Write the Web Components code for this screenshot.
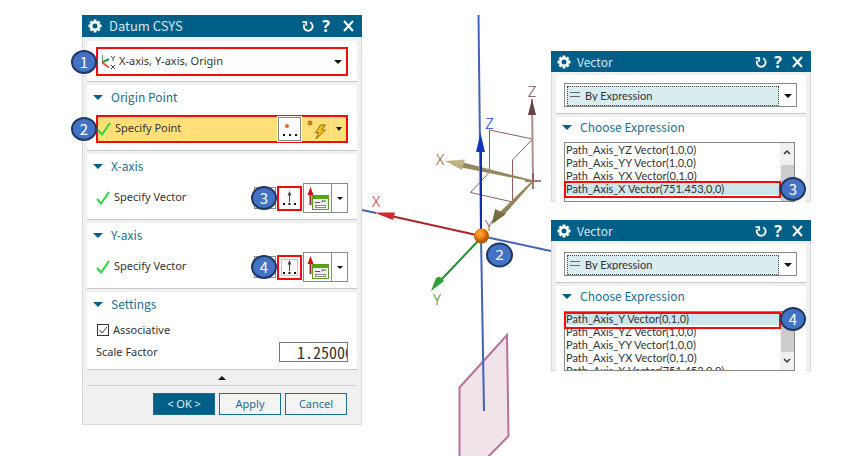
<!DOCTYPE html>
<html lang="en">
<head>
<meta charset="utf-8">
<title>Datum CSYS</title>
<style>
  body { margin: 0; background: #fff; font-family: "Noto Sans", sans-serif; font-size: 11px; color: #333; }
</style>
</head>
<body>
<app-workspace></app-workspace>

<script>
const define = (name, html, setup) => {
  const template = document.createElement('template');
  template.innerHTML = html;
  customElements.define(name, class extends HTMLElement {
    constructor() {
      super();
      this.attachShadow({ mode: 'open' }).append(template.content.cloneNode(true));
    }
    connectedCallback() { if (setup) setup(this, this.shadowRoot); }
  });
};

/* Numbered callout that lies over the control it refers to */
define('step-badge', `
<style>
  :host { display: flex; align-items: center; justify-content: center; box-sizing: border-box; width: 26px; height: 24px;
    border: 2px solid #1f3864; border-radius: 50%; background: #4472c4; color: #fff;
    font: 15px/20px "Noto Sans CJK KR", "Noto Sans", sans-serif; }
</style><slot></slot>`);

/* Window frame with a title bar */
define('dialog-window', `
<style>
  :host { display: block; background: #f0f0f0; box-shadow: inset 0 0 0 1px #d8d8d8; }
  header { display: flex; align-items: center; gap: var(--bar-gap, 7px); height: var(--bar, 22px); padding: 0 8px 0 6px; background: #005f87; color: #d5e5ee; font: var(--title, 13px)/20px "Noto Sans CJK KR", "Noto Sans", sans-serif; }
  h1 { flex: 1; margin: 0; font: inherit; line-height: 20px; }
  button { display: flex; padding: 0; border: 0; background: none; color: #fff; }
  .help { width: 16px; justify-content: center; font: bold 16px/20px "Open Sans", sans-serif; margin: 0 var(--help-end, 2px) 0 -3px; }
  svg { display: block; }
  main { display: flex; flex-direction: column; gap: 3px; padding: var(--top, 4px) 5px 0 5px; }
</style>
<header>
  <svg width="14" height="14" viewBox="0 0 14 14" fill="none" stroke="#fff"><circle cx="7" cy="7" r="3.800" stroke-width="2.600"/><path stroke-width="2.800" d="M7 .5v2M7 11.500v2M.5 7h2M11.500 7h2M2.400 2.400l1.400 1.400M10.200 10.200l1.400 1.400M11.600 2.400l-1.400 1.400M3.800 10.200l-1.400 1.400"/></svg>
  <h1></h1>
  <button aria-label="Reset"><svg width="12" height="14" viewBox="0 0 12 14" fill="none" stroke="#fff" stroke-width="1.800"><path d="M2.200 5.500A4.400 4.400 0 1 0 8 3.300"/><path d="M.5 3.200h3.700v3.500"/></svg></button>
  <button class="help" aria-label="Help">?</button>
  <button aria-label="Close"><svg width="11" height="12" viewBox="0 0 11 12" stroke="#fff" stroke-width="2"><path d="M1 1l9 10M10 1L1 11"/></svg></button>
</header>
<main><slot></slot></main>`,
(el, root) => { root.querySelector('h1').textContent = el.getAttribute('heading'); });

/* White group with an optional collapsible heading */
define('dialog-section', `
<style>
  :host { display: block; background: #fff; border-bottom: 1px solid #c8c8c8; }
  button { display: flex; align-items: center; gap: 8px; height: var(--heading, 24px); padding: 0 0 0 6px; border: 0; background: none; color: #1a6f92; font: 12px/20px "Noto Sans CJK KR", "Noto Sans", sans-serif; }
  i { border: solid transparent; border-width: 5px 5px 0; border-top-color: #005f87; }
  :host(:not([heading])) button { display: none; }
</style>
<button aria-expanded="true"><i></i><span></span></button><slot></slot>`,
(el, root) => { root.querySelector('span').textContent = el.getAttribute('heading') || ''; });

/* Drop-down with an icon in front of its value */
define('icon-select', `
<style>
  :host { display: grid; grid-template-columns: 1fr 17px; box-sizing: border-box; position: relative; align-items: center; color: #333; }
  slot { display: block; position: absolute; left: 3px; pointer-events: none; }
  select { grid-column: 1 / 3; grid-row: 1; width: 100%; height: 100%; padding: 0 0 2px 21px; border: 0; background: none; appearance: none; outline: 0; color: inherit; font: inherit; }
  i { grid-column: 2; grid-row: 1; justify-self: center; border: solid transparent; border-width: 4px 4px 0; border-top-color: #111; pointer-events: none; }
  :host([shaded]) slot { left: 5px; }
  :host([shaded]) select { grid-column: 1; height: calc(100% - 4px); margin-left: 2px; width: calc(100% - 2px); border: 1px dotted #444; background: #d9ecf0; padding: 0 0 4px 17px; }
</style>
<select aria-label="Type"><option></option></select><i></i><slot></slot>`,
(el, root) => { root.querySelector('option').textContent = el.getAttribute('value'); });

/* Completed selection step: tick, label, tools */
define('specify-row', `
<style>
  :host { display: flex; align-items: center; position: relative; height: 30px; margin: 5px 9px 6px; }
  :host([active]) { height: 24px; margin-top: 6px; margin-bottom: 7px; border: 2px solid #f60b0b; background: #ffdf78; }
  .tick { margin-right: 4px; flex: none; }
  :host([active]) .tick { margin-left: -1px; }
  span { flex: 1; padding-bottom: 2px; }
</style>
<svg class="tick" width="14" height="14" viewBox="0 0 14 14" fill="none" stroke="#26d83c" stroke-width="2"><path d="M1 8l4 4.500L13 1"/></svg>
<span></span><slot></slot>`,
(el, root) => { root.querySelector('span').textContent = el.getAttribute('label'); });

define('point-tools', `
<style>
  :host { display: flex; height: 24px; }
  button { display: flex; align-items: center; justify-content: center; box-sizing: border-box; height: 24px; padding: 0; border: 0; background: none; }
  .dots { width: 23px; border: 1px solid #8a8a8a; background: #fff; box-shadow: 0 0 0 1px #fff8dc; }
  .snap { width: 30px; }
  .more { width: 15px; border-left: 1px solid #fff1c0; }
  i { border: solid transparent; border-width: 4px 3px 0; border-top-color: #111; }
</style>
<button class="dots" aria-label="Point dialog"><svg width="20" height="20"><circle cx="7" cy="7" r="2" fill="#e8681c"/><path d="M3 16h2M9 16h2M15 16h2" stroke="#111" stroke-width="2"/></svg></button>
<button class="snap" aria-label="Inferred point"><svg width="24" height="22"><circle cx="6" cy="5" r="2" fill="#e8791c" stroke="#b8641a"/><path d="M16.500 7h5l-4 5h4l-9.500 9 2.500-6.500h-3z" fill="#f5c010" stroke="#8a7018"/></svg></button>
<button class="more" aria-label="Point types"><i></i></button>`);

define('vector-tools', `
<style>
  :host { display: flex; align-items: center; position: relative; }
  button { display: flex; align-items: center; justify-content: center; box-sizing: border-box; padding: 0; border: 1px solid #8a8a8a; background: #fff; }
  .flip { width: 22px; height: 22px; margin-right: 1px; }
  .dots { width: 25px; height: 25px; border: 2px solid #f60b0b; margin-right: 1px; }
  .type { width: 29px; height: 30px; }
  .more { width: 17px; height: 30px; margin-left: -1px; }
  i { border: solid transparent; border-width: 3px 3px 0; border-top-color: #111; }
  step-badge { position: absolute; left: -3px; top: 3px; }
  rect.focus { display: none; }
  :host([focused]) rect.focus { display: block; }
</style>
<button class="flip" aria-label="Reverse direction"></button>
<button class="dots" aria-label="Vector dialog"><svg width="21" height="21"><rect class="focus" x="2.500" y="2.500" width="16" height="16" fill="none" stroke="#888" stroke-dasharray="1 1"/><path d="M10.500 14V5" stroke="#444" fill="none"/><path d="M8.500 7.500L10.500 3l2 4.500z" fill="#444"/><path d="M4 16h2M9.500 16h2M15 16h2" stroke="#111" stroke-width="2"/></svg></button>
<button class="type" aria-label="By expression"><svg width="27" height="28"><path d="M6.500 10v11" stroke="#a03030" stroke-width="2"/><path d="M3.500 11L6.500 3l3 8z" fill="#d01010"/><rect x="8.500" y="11.500" width="16" height="14" fill="#eef1ea" stroke="#5a9a20"/><path d="M9 13.500h15" stroke="#58a618" stroke-width="3"/><path d="M11 18.500h5M18 18.500v-1.500h4" stroke="#555" fill="none"/><rect x="11.500" y="21.500" width="10" height="2" fill="#fff" stroke="#888"/></svg></button>
<button class="more" aria-label="Vector types"><i></i></button>
<step-badge></step-badge>`,
(el, root) => { root.querySelector('step-badge').textContent = el.getAttribute('step'); });

define('datum-dialog', `
<style>
  :host { display: block; }
  .type { position: relative; padding: 6px 9px 5px; }
  .type icon-select { height: 29px; border: 2px solid #f60b0b; }
  step-badge.edge { position: absolute; left: -27px; top: 0; }
  .type step-badge.edge { left: -16px; top: 9px; }
  .settings { display: grid; grid-template-columns: 1fr 69px; align-items: center; row-gap: 2px; padding: 4px 9px 7px; }
  .check { grid-column: 1 / 3; display: flex; align-items: center; gap: 4px; height: 20px; }
  input[type=checkbox] { appearance: none; box-sizing: border-box; width: 12px; height: 12px; margin: 0; border: 1px solid #333; background: #fff; }
  .box { position: relative; display: flex; margin-left: 1px; }
  .box svg { position: absolute; left: 0; top: 0; pointer-events: none; }
  input[type=text] { box-sizing: border-box; width: 100%; height: 20px; padding: 0 0 0 17px; border: 1px solid #777; color: #333; font: 16px/18px "Noto Sans Mono CJK KR", "Noto Sans CJK KR", monospace; outline: 0; }
  .collapse { display: flex; justify-content: center; align-items: center; height: 16px; margin-top: -3px; padding: 0; border: 0; border-bottom: 1px solid #d0d0d0; background: none; }
  .collapse i { border: solid transparent; border-width: 0 4px 4px; border-bottom-color: #111; }
  footer { display: flex; justify-content: flex-end; gap: 4px; padding: 4px 10px 10px; }
  footer button { box-sizing: border-box; width: 62px; height: 22px; padding: 0; border: 1px solid #1a6f92; background: #f4f4f4; color: #1a6f92; font: inherit; line-height: 18px; }
  footer .ok { background: #005f87; color: #e0edf3; }
</style>
<dialog-window heading="Datum CSYS">
  <dialog-section><div class="type"><icon-select value="X-axis, Y-axis, Origin">
    <svg width="16" height="18" fill="none" style="display:block"><path d="M1.500 9V2" stroke="#777"/><path d="M1 9.500L8 6" stroke="#30a050" stroke-width="2"/><path d="M1 9.500l7 5" stroke="#e05050" stroke-width="2"/><path d="M10 3l2 2.500L14 3M12 5.500V8M10 12l4 4M14 12l-4 4" stroke="#444"/></svg>
  </icon-select><step-badge class="edge">1</step-badge></div></dialog-section>
  <dialog-section heading="Origin Point"><specify-row active label="Specify Point"><point-tools></point-tools><step-badge class="edge">2</step-badge></specify-row></dialog-section>
  <dialog-section heading="X-axis"><specify-row label="Specify Vector"><vector-tools step="3"></vector-tools></specify-row></dialog-section>
  <dialog-section heading="Y-axis"><specify-row label="Specify Vector"><vector-tools step="4" focused></vector-tools></specify-row></dialog-section>
  <dialog-section heading="Settings"><div class="settings">
    <div class="check"><div class="box"><input id="assoc" type="checkbox" checked><svg width="12" height="12" fill="none" stroke="#333"><path d="M2.500 6l2.500 3L10 3"/></svg></div><label for="assoc">Associative</label></div>
    <label for="scale">Scale Factor</label><input id="scale" type="text" value="1.25000">
  </div></dialog-section>
  <button class="collapse" aria-label="Show less"><i></i></button>
  <footer><button class="ok">&lt; OK &gt;</button><button>Apply</button><button>Cancel</button></footer>
</dialog-window>`);

define('vector-dialog', `
<style>
  :host { display: block; font-family: Lato, "Noto Sans", sans-serif; }
  dialog-window { --bar: 21px; --bar-gap: 6px; --title: 12px; --top: 3px; --heading: 20px; --help-end: 0px; }
  .type { padding: 8px 9px 6px 8px; }
  .type icon-select { height: 24px; border: 1px solid #888; }
  dialog-section[heading] { border-bottom: 0; }
  .list { position: relative; box-sizing: border-box; display: grid; grid-template-columns: 1fr 14px; height: 60px; margin: 5px 11px 0 8px; border: 1px solid #888; }
  select { box-sizing: border-box; width: 100%; height: 58px; padding: 0; border: 0; background: none; overflow: hidden; outline: 0; font: inherit; color: #333; scrollbar-width: none; }
  option { height: 13px; min-height: 13px; padding: 0 0 0 1px; line-height: 13px; color: #333; }
  option:checked { background: linear-gradient(#cde6ea, #cde6ea); color: #333; }
  .bar { display: flex; flex-direction: column; align-items: center; background: #f0f0f0; }
  .bar svg { flex: none; }
  .thumb { flex: 1; width: 13px; background: #ccc; }
  .mark { position: absolute; left: -1px; right: 13px; height: 17px; box-sizing: border-box; border: 2px solid #f60b0b; }
  step-badge { position: absolute; right: -12px; }
  :host(:not([variant])) .mark { top: 38px; }
  :host(:not([variant])) step-badge { top: 34px; }
  :host([variant]) .mark { top: 0; }
  :host([variant]) step-badge { top: -5px; }
  :host(:not([variant])) .down, :host([variant]) .up { display: none; }
</style>
<dialog-window heading="Vector">
  <dialog-section><div class="type"><icon-select shaded value="By Expression">
    <svg width="10" height="6" style="display:block"><path d="M0 .5h10M0 4.500h10" stroke="#666"/></svg></icon-select></div></dialog-section>
  <dialog-section heading="Choose Expression"><div class="list">
    <select size="4" aria-label="Expressions"></select>
    <div class="bar"><svg class="up" width="12" height="22" fill="none" stroke="#333" stroke-width="1.500"><path d="M3 11l3-3 3 3"/></svg><div class="thumb"></div><svg class="down" width="12" height="18" fill="none" stroke="#333" stroke-width="1.500"><path d="M3 7l3 3 3-3"/></svg></div>
    <div class="mark"></div><step-badge></step-badge>
  </div></dialog-section>
</dialog-window>`,
(el, root) => {
  const items = el.getAttribute('items').split('|');
  const list = root.querySelector('select');
  items.forEach((text, i) => list.add(new Option(text, text, false, i === +el.getAttribute('selected'))));
  list.scrollTop = 0;
  root.querySelector('step-badge').textContent = el.getAttribute('step');
});

/* 3D viewport: path line, dynamic CSYS and target plane */
define('csys-scene', `
<style>
  :host { display: block; }
  svg { display: block; width: 100%; height: auto; font: 15px "Noto Sans", sans-serif; text-anchor: middle; }
  text { font-weight: 300; }
</style>
<svg viewBox="362 15 189 441" fill="none">
  <defs>
    <radialGradient id="ball" cx=".4" cy=".35"><stop offset="0" stop-color="#ffb050"/><stop offset=".6" stop-color="#f08010"/><stop offset="1" stop-color="#b85a00"/></radialGradient>
    <linearGradient id="tan" x1="0" y1="0" x2="0" y2="1"><stop offset="0" stop-color="#c4b88a"/><stop offset="1" stop-color="#6b6136"/></linearGradient>
  </defs>
  <path d="M459.500 460V387.500L507 335l1.500 101L484 461" fill="#f0e4ea" stroke="#b8709a" stroke-width="2"/>
  <path d="M478.500 15L481 236l3 175M362 210l14 3M481 236l70 15" stroke="#4264b8" stroke-width="2"/>
  <path d="M489.500 172v-42l43 9-20 21v42l-42-9.500z" stroke="#905c5c"/>
  <path d="M533 181l-1-82" stroke="#b28c8c" stroke-width="2"/>
  <path d="M532 99l4 16h-8z" fill="#6a4242"/>
  <path d="M525 181h16M533 173v16" stroke="#8a5050" stroke-width="1.500"/>
  <path d="M533 181l-71-18 0 4zM533 181l-33 32 3 2z" fill="#94885a" stroke="#94885a" stroke-width="1.500"/>
  <path d="M445 161l20-1.500-3 10.500zM492 224l3-15 11 5z" fill="url(#tan)"/>
  <path d="M481 236V150" stroke="#1030b0" stroke-width="2"/>
  <path d="M480.500 133l4.500 19h-9z" fill="#1238b8"/>
  <path d="M481 236l-90-20" stroke="#b02028" stroke-width="2"/>
  <path d="M374 212.500l21 0-2 7.500z" fill="#d02830"/>
  <path d="M479 240l-38 40" stroke="#249030" stroke-width="2"/>
  <path d="M431 291l5-13q5-3 8 3z" fill="#30a038"/>
  <circle cx="481.500" cy="236" r="7.500" fill="url(#ball)"/>
  <text x="489.500" y="129" fill="#1848f0">Z</text><text x="532" y="97" fill="#805050">Z</text>
  <text x="440" y="165" fill="#805050">X</text><text x="489" y="231" fill="#805050">Y</text>
  <text x="376" y="207" fill="#d03038">X</text><text x="437" y="305" fill="#249030">Y</text>
  <ellipse cx="499.500" cy="255" rx="12.500" ry="11.500" fill="#4472c4" stroke="#1f3864" stroke-width="2"/>
  <text x="499.500" y="260" fill="#fff" style="font-weight:400">2</text>
</svg>`);

define('app-workspace', `
<style>
  :host { display: grid; grid-template-columns: 280fr 189fr 260fr; align-items: start; padding: 15px 47px 3px 82px; line-height: 18px; }
  .side { display: flex; flex-direction: column; gap: 18px; padding-top: 36px; }
</style>
<datum-dialog></datum-dialog>
<csys-scene></csys-scene>
<div class="side">
  <vector-dialog step="3" selected="3" items="Path_Axis_YZ Vector(1,0,0)|Path_Axis_YY Vector(1,0,0)|Path_Axis_YX Vector(0,1,0)|Path_Axis_X Vector(751.453,0,0)"></vector-dialog>
  <vector-dialog variant="second" step="4" selected="0" items="Path_Axis_Y Vector(0,1,0)|Path_Axis_YZ Vector(1,0,0)|Path_Axis_YY Vector(1,0,0)|Path_Axis_YX Vector(0,1,0)|Path_Axis_X Vector(751.453,0,0)"></vector-dialog>
</div>`);
</script>
</body>
</html>
